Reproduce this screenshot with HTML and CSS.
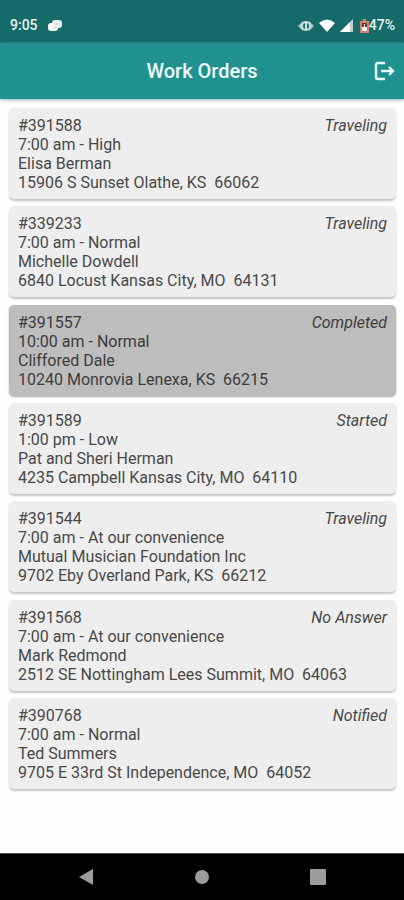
FILE: index.html
```html
<!DOCTYPE html>
<html lang="en">

<head>
    <meta charset="utf-8">
    <meta name="viewport" content="width=device-width, initial-scale=1">
    <title>Work Orders</title>
    <link rel="stylesheet" href="styles.css">
</head>

<body>
    <div class="status-bar">
        <div class="status-left">
            <span>9:05</span>
            <svg class="icon-note" width="14" height="12" viewBox="0 0 14 12" aria-hidden="true">
                <rect x="4" y="0" width="10" height="8" rx="3" fill="#e6eeee" />
                <rect x="0" y="3" width="10" height="8" rx="3" fill="#f6f8f8" />
                <path d="M6 4h4M5 7h4" stroke="#b9cfce" fill="none" />
            </svg>
        </div>
        <div class="status-right">
            <svg class="icon-eye" width="16" height="12" viewBox="0 0 16 12" aria-hidden="true">
                <path d="M0 6l5-5v10zM16 6l-5-5v10z" fill="#a9cbca" />
                <ellipse cx="8" cy="6" rx="4" ry="4" fill="#146b69" stroke="#c6dddc" stroke-width="2" />
                <path d="M8 3v6" stroke="#d5e6e5" stroke-width="2" />
            </svg>
            <svg class="icon-wifi" width="16" height="13" viewBox="0 0 16 13" aria-hidden="true">
                <path d="M0 4Q8-3 16 4L8 13z" fill="#fff" />
            </svg>
            <svg class="icon-signal" width="14" height="13" viewBox="0 0 14 13" aria-hidden="true">
                <path d="M13 0v13H0z" fill="#b8d2d1" />
                <path d="M10 3v10H0z" fill="#fff" />
            </svg>
            <svg class="icon-battery" width="9" height="14" viewBox="0 0 9 14" aria-hidden="true">
                <path d="M3 0h3v2h3v12H0V2h3z" fill="#d58468" />
                <path d="M2 4h5v4H2z" fill="#5b3a35" />
                <path d="M2 8h5v4H2zM4 5h1v3H4z" fill="#fff" />
            </svg>
            <span>47%</span>
        </div>
    </div>

    <header class="app-bar">
        <h1>Work Orders</h1>
        <button class="logout" type="button" aria-label="Log out">
            <svg width="22" height="20" viewBox="0 0 22 20" aria-hidden="true">
                <path d="M11 2H4Q2 2 2 4v12q0 2 2 2h7M7 10h12M15 6l4 4-4 4" fill="none" stroke="#e8f6f5" stroke-width="2.4" />
            </svg>
        </button>
    </header>

    <main class="orders">
        <article class="order">
            <div class="order-top">
                <span>#391588</span>
                <em>Traveling</em>
            </div>
            <div>7:00 am - High</div>
            <div>Elisa Berman</div>
            <div>15906 S Sunset Olathe, KS&nbsp; 66062</div>
        </article>
        <article class="order">
            <div class="order-top">
                <span>#339233</span>
                <em>Traveling</em>
            </div>
            <div>7:00 am - Normal</div>
            <div>Michelle Dowdell</div>
            <div>6840 Locust Kansas City, MO&nbsp; 64131</div>
        </article>
        <article class="order completed">
            <div class="order-top">
                <span>#391557</span>
                <em>Completed</em>
            </div>
            <div>10:00 am - Normal</div>
            <div>Cliffored Dale</div>
            <div>10240 Monrovia Lenexa, KS&nbsp; 66215</div>
        </article>
        <article class="order">
            <div class="order-top">
                <span>#391589</span>
                <em>Started</em>
            </div>
            <div>1:00 pm - Low</div>
            <div>Pat and Sheri Herman</div>
            <div>4235 Campbell Kansas City, MO&nbsp; 64110</div>
        </article>
        <article class="order">
            <div class="order-top">
                <span>#391544</span>
                <em>Traveling</em>
            </div>
            <div>7:00 am - At our convenience</div>
            <div>Mutual Musician Foundation Inc</div>
            <div>9702 Eby Overland Park, KS&nbsp; 66212</div>
        </article>
        <article class="order">
            <div class="order-top">
                <span>#391568</span>
                <em>No Answer</em>
            </div>
            <div>7:00 am - At our convenience</div>
            <div>Mark Redmond</div>
            <div>2512 SE Nottingham Lees Summit, MO&nbsp; 64063</div>
        </article>
        <article class="order">
            <div class="order-top">
                <span>#390768</span>
                <em>Notified</em>
            </div>
            <div>7:00 am - Normal</div>
            <div>Ted Summers</div>
            <div>9705 E 33rd St Independence, MO&nbsp; 64052</div>
        </article>
    </main>

    <nav class="nav-bar">
        <button type="button" aria-label="Back">
            <svg width="16" height="16" viewBox="0 0 16 16" aria-hidden="true">
                <path d="M1 8L15 0v16z" fill="#9c9c9c" />
            </svg>
        </button>
        <button type="button" aria-label="Home">
            <svg width="16" height="16" viewBox="0 0 16 16" aria-hidden="true">
                <circle cx="8" cy="8" r="7" fill="#9c9c9c" />
            </svg>
        </button>
        <button type="button" aria-label="Recent apps">
            <svg width="16" height="16" viewBox="0 0 16 16" aria-hidden="true">
                <rect width="16" height="16" rx="1" fill="#9c9c9c" />
            </svg>
        </button>
    </nav>
</body>

</html>
```

FILE: styles.css
```css
* {
    box-sizing: border-box;
}

body {
    margin: 0;
    min-height: 100vh;
    display: flex;
    flex-direction: column;
    background-color: #fefefe;
    color: #484848;
    font-family: Roboto, "Liberation Sans", sans-serif;
    font-size: 16px;
    line-height: 19px;
}

button {
    display: flex;
    padding: 0;
    border: 0;
    background: none;
}

.status-bar {
    display: flex;
    justify-content: space-between;
    padding: 16px 9px 8px 10px;
    background-color: #146b69;
    color: #e8f3f2;
    font-size: 14px;
    font-weight: 500;
}

.status-left,
.status-right {
    display: flex;
    align-items: center;
}

.status-left {
    gap: 10px;
}

.icon-eye,
.icon-wifi {
    margin-right: 5px;
}

.icon-signal {
    margin-right: 6px;
}

.app-bar {
    display: grid;
    grid-template-columns: 1fr auto 1fr;
    align-items: center;
    padding: 16px 8px;
    background-color: #1f9290;
    box-shadow: 0 1px 3px #8fb5b5;
}

.app-bar h1 {
    grid-column: 2;
    margin: 0;
    color: #f0faf9;
    font-size: 20px;
    font-weight: 500;
    line-height: 24px;
}

.logout {
    justify-self: end;
}

.orders {
    flex: 1;
    display: flex;
    flex-direction: column;
    justify-content: space-between;
    gap: 7px;
    padding: 9px 8px 64px 9px;
}

.order {
    padding: 8px 9px 7px;
    border-radius: 5px;
    background-color: #eee;
    box-shadow: 0 2px 2px #c6c6c6;
}

.order-top {
    display: flex;
    justify-content: space-between;
}

.completed {
    background-color: #bdbdbd;
    color: #3c3c3c;
    box-shadow: 0 1px 2px #a8a8a8;
}

.nav-bar {
    display: flex;
    justify-content: space-between;
    padding: 15px 78px;
    border-top: 1px solid #555;
    background-color: #000;
}
```
